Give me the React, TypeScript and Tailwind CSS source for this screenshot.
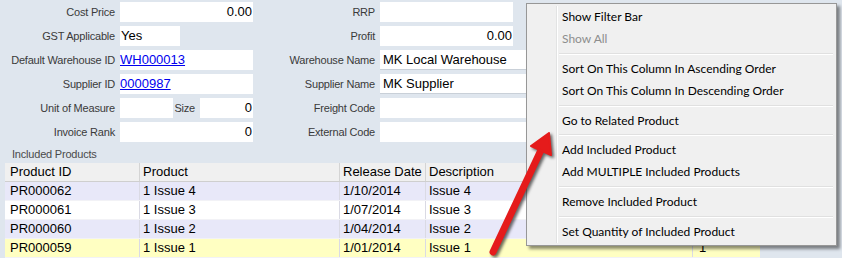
import React from 'react';

const rows = [
  { id: 'PR000062', product: '1 Issue 4', date: '1/10/2014', desc: 'Issue 4', qty: '', bg: 'bg-[#e8e8f9]' },
  { id: 'PR000061', product: '1 Issue 3', date: '1/07/2014', desc: 'Issue 3', qty: '', bg: 'bg-white' },
  { id: 'PR000060', product: '1 Issue 2', date: '1/04/2014', desc: 'Issue 2', qty: '', bg: 'bg-[#e8e8f9]' },
  { id: 'PR000059', product: '1 Issue 1', date: '1/01/2014', desc: 'Issue 1', qty: '1', bg: 'bg-[#ffffc2]' },
];

const menuItems: (string | { label: string; disabled?: boolean })[] = [
  { label: 'Show Filter Bar' },
  { label: 'Show All', disabled: true },
  '-',
  { label: 'Sort On This Column In Ascending Order' },
  { label: 'Sort On This Column In Descending Order' },
  '-',
  { label: 'Go to Related Product' },
  '-',
  { label: 'Add Included Product' },
  { label: 'Add MULTIPLE Included Products' },
  '-',
  { label: 'Remove Included Product' },
  '-',
  { label: 'Set Quantity of Included Product' },
];

function Label({ children, className = '' }: { children?: React.ReactNode; className?: string }) {
  return (
    <span className={`shrink-0 text-right text-[11px] tracking-[-0.2px] text-[#3a3a3a] ${className}`}>
      {children}
    </span>
  );
}

function ContextMenu() {
  return (
    <div className="absolute left-[526px] top-[3px] flex h-[243px] w-[311px] border border-[#979797] bg-[#f0f0f0] p-[2px] font-['Lato',sans-serif] text-[12px] text-black shadow-[3px_3px_3px_rgba(0,0,0,0.45)]">
      {/* gutter */}
      <div className="w-[28px] shrink-0 border-r border-[#e2e3e3]" />
      <div className="w-px shrink-0 bg-white" />
      <div className="flex flex-1 flex-col">
        {menuItems.map((item, i) =>
          item === '-' ? (
            <div key={i} className="flex h-2 flex-col justify-center pl-[1px] pr-[1px]">
              <div className="h-px bg-[#e0e0e0]" />
              <div className="h-px bg-white" />
            </div>
          ) : (
            <div
              key={i}
              className={`flex h-[22px] items-center pl-[4px] ${
                typeof item !== 'string' && item.disabled ? 'text-[#8d8d8d]' : ''
              }`}
            >
              {typeof item !== 'string' && item.label}
            </div>
          )
        )}
      </div>
    </div>
  );
}

function Arrow() {
  return (
    <svg
      className="pointer-events-none absolute left-[480px] top-[120px] drop-shadow-[2px_2px_1.5px_rgba(40,40,40,0.7)]"
      width="80"
      height="140"
      viewBox="0 0 80 140"
    >
      <line x1="13" y1="132" x2="62" y2="28" stroke="#e51b1b" strokeWidth="7" strokeLinecap="round" />
      <polygon points="69,13 51,26 71,35" fill="#e51b1b" stroke="#e51b1b" strokeWidth="2" strokeLinejoin="round" />
    </svg>
  );
}

export default function App() {
  return (
    <div className="relative h-[258px] w-[842px] overflow-hidden bg-[#dfe6ee] font-['Liberation_Sans',Arial,sans-serif]">
      {/* Form */}
      <div className="flex flex-col gap-1 pt-[2px]">
        <div className="flex h-5 items-center">
          <Label className="w-[115px]">Cost Price</Label>
          <div className="ml-[5px] flex h-5 w-[133px] items-center justify-end bg-white pr-[1px] text-[13px]">0.00</div>
          <Label className="w-[122px]">RRP</Label>
          <div className="ml-[5px] h-5 w-[133px] bg-white" />
        </div>
        <div className="flex h-5 items-center">
          <Label className="w-[115px]">GST Applicable</Label>
          <div className="ml-[5px] flex h-5 w-[60px] items-center bg-white pl-[1px] text-[13px]">Yes</div>
          <Label className="w-[195px]">Profit</Label>
          <div className="ml-[5px] flex h-5 w-[133px] items-center justify-end bg-white pr-[1px] text-[13px]">0.00</div>
        </div>
        <div className="flex h-5 items-center">
          <Label className="w-[115px]">Default Warehouse ID</Label>
          <div className="ml-[5px] flex h-5 w-[133px] items-center bg-white text-[13px]">
            <span className="text-[#0000ee] underline">WH000013</span>
          </div>
          <Label className="w-[122px]">Warehouse Name</Label>
          <div className="ml-[5px] flex h-5 w-[180px] items-center border-b border-[#c9d0d8] bg-white pl-[3px] text-[13px]">MK Local Warehouse</div>
        </div>
        <div className="flex h-5 items-center">
          <Label className="w-[115px]">Supplier ID</Label>
          <div className="ml-[5px] flex h-5 w-[133px] items-center bg-white text-[13px]">
            <span className="text-[#0000ee] underline">0000987</span>
          </div>
          <Label className="w-[122px]">Supplier Name</Label>
          <div className="ml-[5px] flex h-5 w-[180px] items-center border-b border-[#c9d0d8] bg-white pl-[3px] text-[13px]">MK Supplier</div>
        </div>
        <div className="flex h-5 items-center">
          <Label className="w-[115px]">Unit of Measure</Label>
          <div className="ml-[5px] h-5 w-[53px] bg-white" />
          <Label className="w-[22px]">Size</Label>
          <div className="ml-[5px] flex h-5 w-[53px] items-center justify-end bg-white pr-[1px] text-[13px]">0</div>
          <Label className="w-[122px]">Freight Code</Label>
          <div className="ml-[5px] h-5 w-[180px] bg-white" />
        </div>
        <div className="flex h-5 items-center">
          <Label className="w-[115px]">Invoice Rank</Label>
          <div className="ml-[5px] flex h-5 w-[133px] items-center justify-end bg-white pr-[1px] text-[13px]">0</div>
          <Label className="w-[122px]">External Code</Label>
          <div className="ml-[5px] h-5 w-[180px] bg-white" />
        </div>
      </div>

      {/* Included products */}
      <div className="mt-[5px] pl-3 text-[11px] leading-[14px] tracking-[-0.2px] text-[#4a4a4a]">Included Products</div>
      <div className="ml-[5px] mt-[2px] w-[755px] text-[13px] text-black">
        <div className="flex h-[19px] border-b border-[#cfcfcf] bg-[#f0f0f0]">
          <div className="flex w-[135px] items-center border-r border-[#d4d4d4] pl-[5px]">Product ID</div>
          <div className="flex w-[200px] items-center border-r border-[#d4d4d4] pl-[3px]">Product</div>
          <div className="flex w-[86px] items-center border-r border-[#d4d4d4] pl-[3px]">Release Date</div>
          <div className="flex w-[267px] items-center border-r border-[#d4d4d4] pl-[3px]">Description</div>
          <div className="flex-1" />
        </div>
        {rows.map((r) => (
          <div key={r.id} className={`flex h-[19px] border-b border-[#f2f2f6] ${r.bg}`}>
            <div className="flex w-[135px] items-center border-r border-[#dadae4] pl-[5px]">{r.id}</div>
            <div className="flex w-[200px] items-center border-r border-[#dadae4] pl-[3px]">{r.product}</div>
            <div className="flex w-[86px] items-center border-r border-[#dadae4] pl-[3px]">{r.date}</div>
            <div className="flex w-[267px] items-center border-r border-[#dadae4] pl-[3px]">{r.desc}</div>
            <div className="flex flex-1 items-center pl-[6px]">{r.qty}</div>
          </div>
        ))}
      </div>

      <ContextMenu />
      <Arrow />
    </div>
  );
}
